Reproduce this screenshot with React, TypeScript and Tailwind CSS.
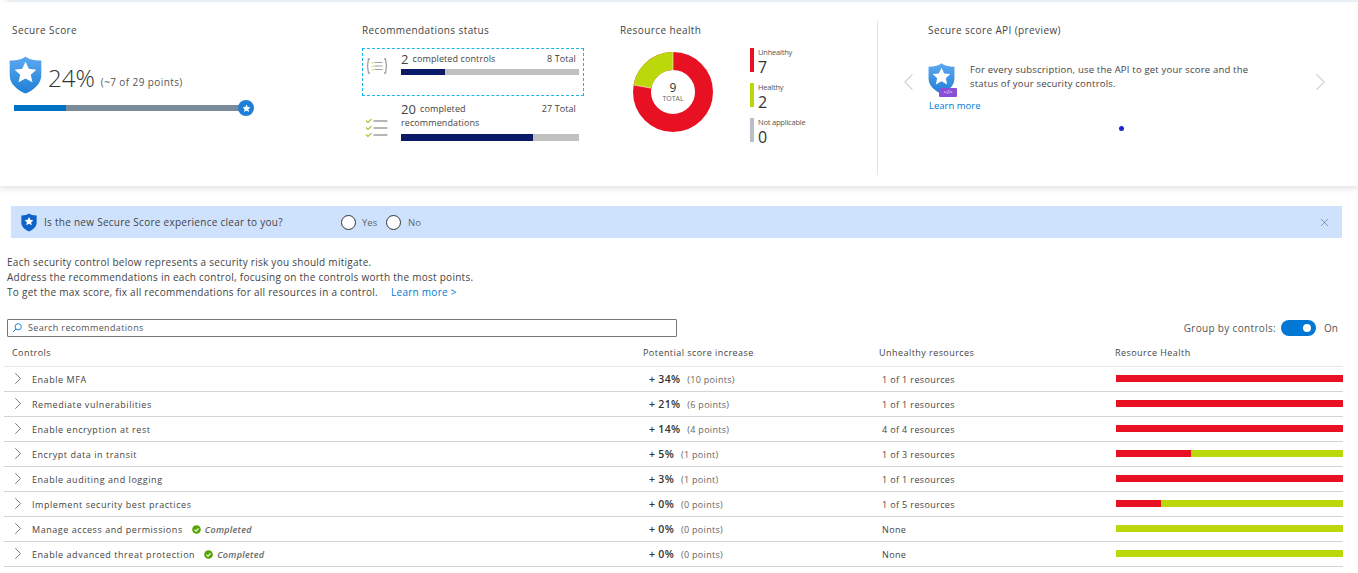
import { X } from "lucide-react";

const ROWS = [
  { name: "Enable MFA", pct: "+ 34%", pts: "(10 points)", res: "1 of 1 resources", red: 100 },
  { name: "Remediate vulnerabilities", pct: "+ 21%", pts: "(6 points)", res: "1 of 1 resources", red: 100 },
  { name: "Enable encryption at rest", pct: "+ 14%", pts: "(4 points)", res: "4 of 4 resources", red: 100 },
  { name: "Encrypt data in transit", pct: "+ 5%", pts: "(1 point)", res: "1 of 3 resources", red: 33 },
  { name: "Enable auditing and logging", pct: "+ 3%", pts: "(1 point)", res: "1 of 1 resources", red: 100 },
  { name: "Implement security best practices", pct: "+ 0%", pts: "(0 points)", res: "1 of 5 resources", red: 20 },
  { name: "Manage access and permissions", pct: "+ 0%", pts: "(0 points)", res: "None", red: 0, done: true },
  { name: "Enable advanced threat protection", pct: "+ 0%", pts: "(0 points)", res: "None", red: 0, done: true },
];

const LEGEND = [
  { label: "Unhealthy", value: "7", color: "bg-[#e81123]" },
  { label: "Healthy", value: "2", color: "bg-[#bad80a]" },
  { label: "Not applicable", value: "0", color: "bg-[#b8bfc9]" },
];

const STAR = "M12 5.2l2 4.3 4.6.5-3.4 3.1 1 4.6-4.2-2.4-4.2 2.4 1-4.6L5.4 10l4.6-.5z";

function Shield({ id, className }: { id: string; className: string }) {
  return (
    <svg viewBox="0 0 24 27" className={className}>
      <defs>
        <linearGradient id={id} x1="0" y1="0" x2="0" y2="1">
          <stop offset="0" stopColor="#5ea8f0" />
          <stop offset="1" stopColor="#1f7fd6" />
        </linearGradient>
      </defs>
      <path d="M12 0c2.4 2 6 3 11.5 3v10.5C23.5 20 18 24.500 12 27 6 24.500.5 20 .5 13.500V3C6 3 9.600 2 12 0z" fill={`url(#${id})`} />
      <path d={STAR} fill="#fff" transform="translate(-2.400 -2.400) scale(1.2)" />
    </svg>
  );
}

function Donut() {
  return (
    <svg viewBox="0 0 80 80" className="w-[80px] h-[80px]">
      <circle cx="40" cy="40" r="31" fill="none" stroke="#e81123" strokeWidth="18" />
      <path d="M40 9A31 31 0 0 0 9.470 34.600" fill="none" stroke="#bad80a" strokeWidth="18" />
      <path d="M40 0V18M.6 33L18.300 36.200" stroke="#fff" strokeWidth="0.7" opacity="0.8" />
    </svg>
  );
}

function BracketIcon() {
  return (
    <svg viewBox="0 0 22 16" className="w-[22px] h-[16px]" fill="none">
      <path d="M4 1H2.500L1.500 8l1 7H4M18 1h1.500l1 7-1 7H18" stroke="#a0a0a0" strokeWidth="1.300" />
      <path d="M8.500 4.500h8M8.500 8h8M8.500 11.500h8" stroke="#a0a0a0" strokeWidth="1.100" />
      <path d="M5.500 4.500l1 1 1-1.500M5.500 8l1 1 1-1.500M5.500 11.500l1 1 1-1.500" stroke="#bad80a" strokeWidth="0.800" />
    </svg>
  );
}

function ChecklistIcon() {
  return (
    <svg viewBox="0 0 23 20" className="w-[23px] h-[20px]" fill="none">
      <path d="M8.500 3h14M8.500 10h14M8.500 17h14" stroke="#a0a0a0" strokeWidth="1.300" />
      <path d="M1 2.500l2 2L6.500 1M1 9.500l2 2L6.500 8M1 16.500l2 2L6.500 15" stroke="#a4c639" strokeWidth="1.100" />
    </svg>
  );
}

function Check() {
  return (
    <svg viewBox="0 0 9 9" className="w-[9px] h-[9px] shrink-0">
      <circle cx="4.500" cy="4.500" r="4.300" fill="#57a300" />
      <path d="M2.500 4.600l1.500 1.500 2.600-2.800" fill="none" stroke="#fff" strokeWidth="1.100" />
    </svg>
  );
}

function Chevron({ className, flip }: { className: string; flip?: boolean }) {
  return (
    <svg viewBox="0 0 6 11" className={className} fill="none" stroke="currentColor" strokeWidth="0.700">
      <path d={flip ? "M5.700.3L.5 5.500l5.200 5.200" : "M.3.300l5.200 5.200-5.200 5.200"} />
    </svg>
  );
}

export default function App() {
  return (
    <div className="w-[1358px] h-[573px] overflow-hidden bg-white font-['Open_Sans',sans-serif] text-[#444] text-[9.5px] leading-[14px]">
      <div className="ml-[7px] h-[2px] bg-[#f0f5fb]" />

      {/* TOP — Summary tiles */}
      <div className="relative flex h-[184px] shadow-[0_2px_7px_rgba(0,0,0,0.13)]">
        <div className="w-[350px] ml-3 pt-[21px]">
          <p className="text-[10px] tracking-[0.4px] text-[#444]">Secure Score</p>
          <div className="flex items-start h-[38px] -ml-[3px] mt-[19px]">
            <Shield id="score-shield" className="w-[33px] h-[38px]" />
            <span className="ml-[6px] mt-[3px] text-[24px] leading-[38px] font-light text-[#333]">24%</span>
            <span className="ml-[6px] mt-[19px] text-[10px] tracking-[0.4px] text-[#555]">(~7 of 29 points)</span>
          </div>
          <div className="relative ml-[2px] mt-[11px] w-[226px] h-[6px] bg-[#7a8b9a]">
            <div className="h-full w-[52px] bg-[#0072c6]" />
            <div className="absolute -right-[14px] -top-[5px] w-4 h-4 rounded-full bg-[#1f7fd6] flex items-center justify-center">
              <svg viewBox="0 0 24 24" className="w-[11px] h-[11px]"><path d={STAR} fill="#fff" transform="translate(-3.600 -3.600) scale(1.3)" /></svg>
            </div>
          </div>
        </div>

        <div className="w-[258px] pt-[21px]">
          <p className="text-[10px] tracking-[0.4px]">Recommendations status</p>
          <div className="flex w-[222px] h-[48px] mt-[11px] border border-dashed border-[#1ab5e8] text-[9px] tracking-[0.1px]">
            <div className="ml-[3px] mt-[9px]"><BracketIcon /></div>
            <div className="ml-[13px] w-[178px]">
              <div className="flex items-center justify-between h-[20px] pr-[3px]">
                <span className="flex items-center gap-[4px]"><b className="text-[13px] font-normal">2</b>completed controls</span>
                <span>8 Total</span>
              </div>
              <div className="h-[6px] bg-[#c0c0c0]"><div className="h-full w-[44px] bg-[#0b1a66]" /></div>
            </div>
          </div>
          <div className="flex w-[222px] mt-[3px] text-[9px] tracking-[0.1px]">
            <div className="ml-[3px] mt-[19px]"><ChecklistIcon /></div>
            <div className="ml-[13px] w-[178px]">
              <div className="flex items-center justify-between h-[20px] pr-[3px]">
                <span className="flex items-center gap-[4px]"><b className="text-[13px] font-normal">20</b>completed</span>
                <span>27 Total</span>
              </div>
              <p className="h-[14px] -mt-[3px] mb-[4px]">recommendations</p>
              <div className="h-[7px] bg-[#c0c0c0]"><div className="h-full w-[132px] bg-[#0b1a66]" /></div>
            </div>
          </div>
        </div>

        <div className="w-[257px] pt-[21px]">
          <p className="text-[10px] tracking-[0.4px]">Resource health</p>
          <div className="flex mt-[11px]">
            <div className="ml-[13px] mt-[4px] relative w-[80px] h-[80px]">
              <Donut />
              <div className="absolute inset-0 flex flex-col items-center justify-center gap-px pt-px">
                <span className="text-[12px] leading-[12px] text-[#333]">9</span>
                <span className="text-[7px] leading-[8px] text-[#666]">TOTAL</span>
              </div>
            </div>
            <div className="ml-[37px] flex flex-col gap-[11px]">
              {LEGEND.map((item) => (
                <div key={item.label} className="flex h-[24px]">
                  <div className={`w-[4px] h-full ${item.color}`} />
                  <div className="ml-[4px]">
                    <p className="text-[7.500px] leading-[9px] tracking-[-0.2px] text-[#555]">{item.label}</p>
                    <p className="mt-[2px] text-[16px] leading-[17px] text-[#333]">{item.value}</p>
                  </div>
                </div>
              ))}
            </div>
          </div>
        </div>

        <div className="w-px h-[154px] mt-[19px] bg-[#e3e3e3]" />

        <div className="relative flex-1 pt-[21px] pl-[50px]">
          <p className="text-[10px] tracking-[0.4px]">Secure score API (preview)</p>
          <div className="flex mt-[26px]">
            <div className="relative w-[27px] h-[32px]">
              <Shield id="api-shield" className="w-[27px] h-[31px]" />
              <div className="absolute -right-[2px] bottom-[-2px] w-[18px] h-[9px] rounded-[1px] bg-[#8a4fd8] text-white text-[6px] leading-[9px] text-center">&lt;/&gt;</div>
            </div>
            <p className="ml-[15px] w-[290px] text-[9.500px] leading-[14px] tracking-[0.2px] text-[#444]">
              For every subscription, use the API to get your score and the status of your security controls.
            </p>
          </div>
          <p className="mt-[4px] ml-px text-[#0078d4]">Learn more</p>
          <div className="ml-[191px] mt-[13px] w-[5px] h-[5px] rounded-full bg-[#2222cc]" />
          <Chevron flip className="absolute left-[26px] top-[72px] w-[9px] h-[16px] text-[#c8c8c8]" />
          <Chevron className="absolute left-[438px] top-[72px] w-[9px] h-[16px] text-[#c8c8c8]" />
        </div>
      </div>

      {/* Feedback banner */}
      <div className="flex items-center ml-[11px] mt-[20px] w-[1331px] h-[32px] bg-[#cfe2fd]">
        <svg viewBox="0 0 24 27" className="ml-[10px] w-[16px] h-[19px]">
          <path d="M12 0c2.400 2 6 3 11.500 3v10.500C23.500 20 18 24.500 12 27 6 24.500.5 20 .5 13.500V3C6 3 9.600 2 12 0z" fill="#0f62c9" />
          <path d={STAR} fill="#fff" />
        </svg>
        <span className="ml-[7px] w-[297px] text-[10px] tracking-[0.27px]">Is the new Secure Score experience clear to you?</span>
        <span className="w-[15px] h-[15px] rounded-full border border-[#333] bg-white" />
        <span className="ml-[6px] mt-px w-[24px] text-[#666]">Yes</span>
        <span className="w-[15px] h-[15px] rounded-full border border-[#333] bg-white" />
        <span className="ml-[7px] mt-px text-[#666]">No</span>
        <X strokeWidth={1} className="ml-auto mr-[11px] w-[13px] h-[13px] text-[#555]" />
      </div>

      {/* Description */}
      <div className="ml-[7px] mt-[17px] text-[10px] leading-[15px] tracking-[0.27px]">
        <p>Each security control below represents a security risk you should mitigate.</p>
        <p>Address the recommendations in each control, focusing on the controls worth the most points.</p>
        <p>To get the max score, fix all recommendations for all resources in a control.<span className="ml-[13px] text-[#0078d4]">Learn more &gt;</span></p>
      </div>

      {/* Search and toggle */}
      <div className="flex items-center ml-[7px] mt-[19px] h-[18px]">
        <div className="flex items-center w-[670px] h-[18px] border border-[#777] rounded-[1px]">
          <svg viewBox="0 0 10 10" className="ml-[4px] w-[10px] h-[10px]" fill="none" stroke="#0078d4" strokeWidth="0.900"><circle cx="6.200" cy="3.800" r="3.100" /><path d="M4 6L.8 9.200" /></svg>
          <span className="ml-[6px] text-[9px] tracking-[0.36px] text-[#555]">Search recommendations</span>
        </div>
        <span className="ml-auto text-[10px] tracking-[0.33px] text-[#555]">Group by controls:</span>
        <div className="flex items-center justify-end ml-[5px] w-[35px] h-[16px] pr-[5px] rounded-full bg-[#0078d4]">
          <div className="w-[8px] h-[8px] rounded-full bg-white" />
        </div>
        <span className="ml-[8px] mr-[20px] text-[10px] text-[#555]">On</span>
      </div>

      {/* Table */}
      <div className="ml-[4px] w-[1339px] mt-[8px] text-[9px] tracking-[0.45px]">
        <div className="grid grid-cols-[631px_236px_236px_228px] h-[22px] pt-px pl-2 border-b border-[#e8e8e8]">
          <span>Controls</span>
          <span>Potential score increase</span>
          <span>Unhealthy resources</span>
          <span>Resource Health</span>
        </div>
        {ROWS.map((row) => (
          <div key={row.name} className="grid grid-cols-[631px_236px_236px_228px] h-[25px] items-center pl-2 border-b border-[#d4d4d4]">
            <div className="flex items-center">
              <Chevron className="ml-[3px] -mt-px w-[6px] h-[11px] text-[#444]" />
              <span className="ml-[11px] mt-px tracking-[0.55px]">{row.name}</span>
              {row.done && (
                <span className="flex items-center ml-[9px] mt-px">
                  <Check />
                  <i className="ml-[4px] font-semibold text-[#666] tracking-[0.3px]">Completed</i>
                </span>
              )}
            </div>
            <div className="pl-[6px]">
              <b className="text-[10.500px] font-semibold tracking-[0.3px] text-[#333]">{row.pct}</b>
              <span className="ml-[7px] tracking-[0.3px] text-[#666]">{row.pts}</span>
            </div>
            <div className="pl-[3px] mt-px tracking-[0.37px]">{row.res}</div>
            <div className="flex h-[7px] -mt-px ml-px bg-[#bad80a]">
              <div className="h-full bg-[#e81123]" style={{ width: `${row.red}%` }} />
            </div>
          </div>
        ))}
      </div>
    </div>
  );
}
